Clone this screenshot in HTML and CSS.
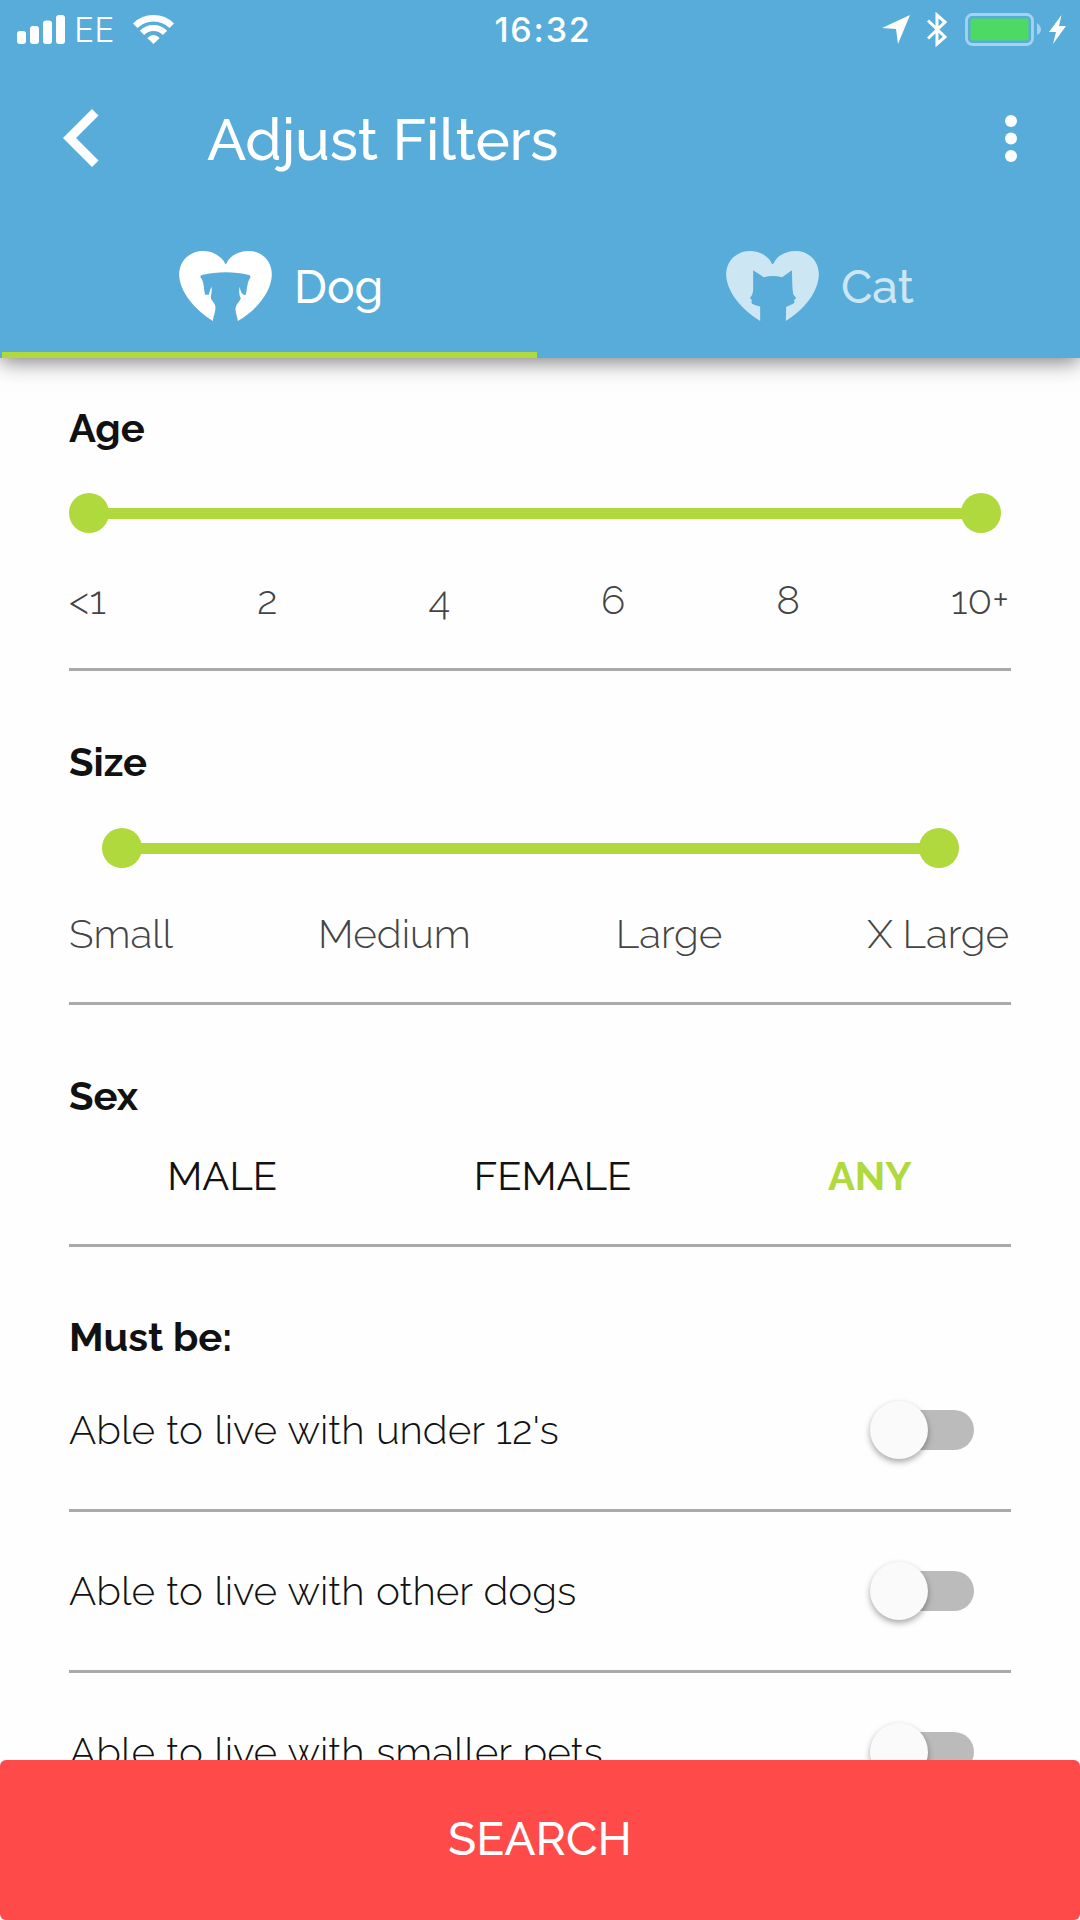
FILE: index.html
```html
<!DOCTYPE html>
<html lang="en">
<head>
  <meta charset="UTF-8">
  <meta name="viewport" content="width=device-width, initial-scale=1.0">
  <title>Adjust Filters</title>
  <link rel="stylesheet" href="styles.css">
</head>
<body>
  <header class="header">
    <div class="status-bar">
      <div class="status-left">
        <svg class="signal" width="48" height="29" viewBox="0 0 48 29" fill="#fff">
          <rect x="0" y="16" width="9" height="13" rx="3"/>
          <rect x="13" y="11" width="9" height="18" rx="3"/>
          <rect x="26" y="5.5" width="9" height="23.5" rx="3"/>
          <rect x="39" y="0" width="9" height="29" rx="3"/>
        </svg>
        <span class="carrier">EE</span>
        <svg class="wifi" width="41" height="29" viewBox="0 0 41 29" fill="none" stroke="#fff">
          <path d="M2.200 10.800A26 26 0 0 1 38.800 10.800" stroke-width="6.500"/>
          <path d="M9 17.800A16 16 0 0 1 32 17.800" stroke-width="6"/>
          <path d="M14.300 23Q20.500 17 26.700 23L20.500 29Z" fill="#fff" stroke="none"/>
        </svg>
      </div>
      <span class="time">16:32</span>
      <div class="status-right">
        <svg width="28" height="29" viewBox="0 0 28 29" fill="#fff"><path d="M28 0L16 29L14 14L0 13Z"/></svg>
        <svg class="bluetooth" width="20" height="35" viewBox="0 0 20 35" fill="none" stroke="#fff" stroke-width="3"><path d="M1 8.500L18 25L10 32V3L18 10L1 26.500"/></svg>
        <svg class="battery" width="77" height="33" viewBox="0 0 77 33">
          <rect x="1.500" y="1.500" width="66" height="30" rx="6" fill="none" stroke="#a5d2ec" stroke-width="2.800"/>
          <rect x="5.500" y="5.500" width="58" height="22" rx="2" fill="#4cd964"/>
          <path d="M72 10Q76 13 76 16.500T72 22Z" fill="#a5d2ec"/>
        </svg>
        <svg class="bolt" width="17" height="29" viewBox="0 0 17 29" fill="#fff"><path d="M12.500 0L0 17H7L4 29L17 11H10Z"/></svg>
      </div>
    </div>

    <div class="app-bar">
      <svg class="back" width="36" height="58" viewBox="0 0 36 58" fill="#fff"><path d="M29 0L35.500 6.500L13 29L35.500 51.500L29 58L0 29Z"/></svg>
      <h1 class="title">Adjust Filters</h1>
      <svg class="more" width="12" height="47" viewBox="0 0 12 47" fill="#fff">
        <circle cx="6" cy="6" r="6"/>
        <circle cx="6" cy="23.500" r="6"/>
        <circle cx="6" cy="41" r="6"/>
      </svg>
    </div>

    <nav class="tabs">
      <div class="tab active">
        <svg class="heart" width="93" height="70" viewBox="57 63 278 210" fill="#fff"><path d="M195 101C185 80 160 63 128 63C88 63 57 93 57 133C57 185 105 240 158 273C160 258 166 246 166 232C166 217 152 214 152 200C154 190 156 180 154 170C150 178 148 186 146 194H135C130 178 133 155 121 142C120 138 122 136 126 135C170 124 225 124 266 135C270 136 272 140 270 144C261 155 261 178 257 194H250C243 190 241 180 238 170C236 185 237 195 242 205C240 214 226 222 226 238C226 250 232 262 233 273C290 240 335 185 335 133C335 93 305 63 266 63C232 63 208 80 200 98Q197 104 195 101Z"/></svg>
        <span class="tab-label">Dog</span>
      </div>
      <div class="tab">
        <svg class="heart" width="93" height="70" viewBox="79 63 278 210" fill="#fff"><path d="M216 101C207 80 182 63 150 63C110 63 79 93 79 133C79 185 127 240 181 273V230C174 226 160 226 155 218L156 210L150 204C156 198 159 192 160 180V121L192 142Q218 134 247 142L276 121C278 145 276 170 280 193L289 204L283 210L284 218C277 224 266 226 259 231L258 273C312 240 357 185 357 133C357 93 327 63 288 63C254 63 230 80 222 99Q219 103 216 101Z"/></svg>
        <span class="tab-label">Cat</span>
      </div>
    </nav>
  </header>

  <main class="filters">
    <section class="filter age">
      <h2>Age</h2>
      <div class="slider"><span class="handle"></span><span class="handle"></span></div>
      <div class="labels">
        <span>&lt;1</span>
        <span>2</span>
        <span>4</span>
        <span>6</span>
        <span>8</span>
        <span>10+</span>
      </div>
    </section>

    <section class="filter size">
      <h2>Size</h2>
      <div class="slider"><span class="handle"></span><span class="handle"></span></div>
      <div class="labels">
        <span>Small</span>
        <span>Medium</span>
        <span>Large</span>
        <span>X Large</span>
      </div>
    </section>

    <section class="filter sex">
      <h2>Sex</h2>
      <div class="options">
        <span>MALE</span>
        <span>FEMALE</span>
        <span class="selected">ANY</span>
      </div>
    </section>

    <section class="must-be">
      <h2>Must be:</h2>
      <div class="row first">
        <span class="row-label">Able to live with under 12's</span>
        <span class="toggle"><span class="knob"></span></span>
      </div>
      <div class="row">
        <span class="row-label">Able to live with other dogs</span>
        <span class="toggle"><span class="knob"></span></span>
      </div>
      <div class="row">
        <span class="row-label">Able to live with smaller pets</span>
        <span class="toggle"><span class="knob"></span></span>
      </div>
    </section>
  </main>

  <button class="search-button">SEARCH</button>
</body>
</html>
```

FILE: styles.css
```css
* {
  box-sizing: border-box;
}

body {
  margin: 0;
  height: 1920px;
  display: flex;
  flex-direction: column;
  overflow: hidden;
  background-color: #fefefe;
  color: #111;
  font-family: Raleway, Lato, sans-serif;
}

svg {
  display: block;
  flex: none;
}

/* Header */
.header {
  flex: none;
  height: 358px;
  background-color: #57acd9;
  color: #fff;
  box-shadow: 0 4px 20px rgba(0, 0, 0, 0.5);
  z-index: 1;
}

.status-bar {
  display: grid;
  grid-template-columns: 1fr auto 1fr;
  align-items: center;
  height: 58px;
  padding: 0 14px 0 17px;
}

.status-left,
.status-right {
  display: flex;
  align-items: center;
}

.status-right {
  justify-content: flex-end;
}

.carrier {
  margin-left: 9px;
  width: 59px;
  font-family: Inter, sans-serif;
  font-size: 34px;
  font-weight: 300;
}

.time {
  padding-left: 3px;
  font-family: Inter, sans-serif;
  font-size: 34px;
  font-weight: 500;
  letter-spacing: 1.8px;
}

.bluetooth {
  margin-left: 17px;
}

.battery {
  margin-left: 18px;
}

.bolt {
  margin-left: 7px;
}

.app-bar {
  display: flex;
  align-items: center;
  height: 160px;
  padding: 0 63px;
}

.title {
  flex: 1;
  margin: 2px 0 0 108px;
  font-size: 58px;
  font-weight: 500;
  letter-spacing: -0.2px;
}

.tabs {
  display: flex;
  height: 140px;
  padding-left: 2px;
}

.tab {
  width: 535px;
  display: flex;
  align-items: center;
  padding: 0 0 8px 177px;
}

.tab + .tab {
  padding-left: 189px;
}

.tab.active {
  padding-bottom: 2px;
  border-bottom: 6px solid #afd93d;
}

.tab:not(.active) > * {
  opacity: 0.7;
}

.heart {
  margin-top: 4px;
}

.tab-label {
  margin: 5px 0 0 22px;
  font-size: 46px;
  font-weight: 500;
}

/* Filters */
.filters {
  flex: 1;
  min-height: 0;
  overflow: hidden;
  padding: 0 69px;
}

h2 {
  margin: 0;
  font-size: 40px;
  font-weight: 700;
  line-height: 60px;
}

.filter {
  border-bottom: 3px solid #aaa;
  padding: 61px 0 38px;
}

.filter.age {
  padding-top: 40px;
}

.slider {
  display: flex;
  justify-content: space-between;
  height: 40px;
  margin: 36px 10px 36px 0;
  background: linear-gradient(#afd93d, #afd93d) center / calc(100% - 20px) 11px no-repeat;
}

.age .slider {
  margin-top: 35px;
  margin-bottom: 37px;
}

.size .slider {
  margin-left: 33px;
  margin-right: 52px;
}

.handle {
  width: 40px;
  height: 40px;
  border-radius: 50%;
  background-color: #afd93d;
}

.labels {
  display: flex;
  justify-content: space-between;
  padding-right: 2px;
  color: #444;
  font-size: 40.4px;
  font-weight: 300;
  line-height: 60px;
}

.options {
  display: flex;
  justify-content: space-around;
  margin-top: 20px;
  padding-right: 1px;
  font-size: 40px;
  line-height: 60px;
}

.selected {
  color: #afd93d;
  font-weight: 700;
}

.must-be {
  padding-top: 60px;
}

.row {
  display: flex;
  align-items: center;
  justify-content: space-between;
  height: 161px;
  padding-right: 37px;
  border-bottom: 3px solid #aaa;
}

.row.first {
  height: 145px;
  padding-bottom: 16px;
}

.row-label {
  padding-bottom: 1px;
  font-size: 40.4px;
  font-weight: 300;
  word-spacing: 1px;
}

/* Toggle */
.toggle {
  display: flex;
  align-items: center;
  width: 92px;
  height: 40px;
  border-radius: 20px;
  background-color: #bbb;
}

.knob {
  flex: none;
  width: 58px;
  height: 58px;
  margin-left: -12px;
  border-radius: 50%;
  background-color: #fafafa;
  box-shadow: 0 3px 6px rgba(0, 0, 0, 0.35);
}

.search-button {
  flex: none;
  height: 160px;
  padding: 0 0 3px;
  border: none;
  border-radius: 6px;
  background-color: #ff4a4a;
  color: #fff;
  font-family: inherit;
  font-size: 46.3px;
  font-weight: 500;
}
```
